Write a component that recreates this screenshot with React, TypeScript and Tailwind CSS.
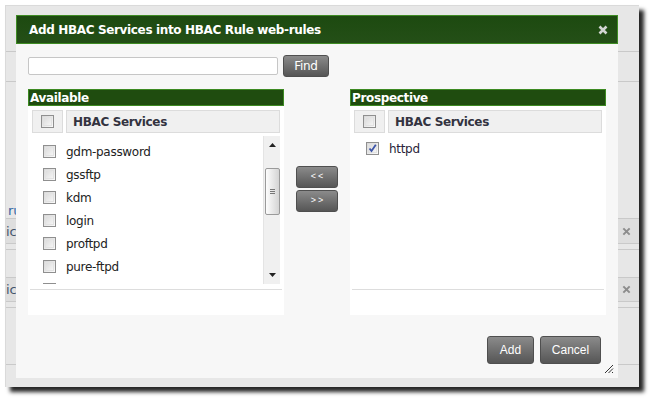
import type { ReactNode } from 'react';

const FONT = { fontFamily: '"DejaVu Sans", Verdana, sans-serif' };
const ARIAL = { fontFamily: '"Liberation Sans", Arial, sans-serif' };

const AVAILABLE = ['gdm-password', 'gssftp', 'kdm', 'login', 'proftpd', 'pure-ftpd', 'pure-ftpd-2'];

// page rows behind the dialog: [height, band]
const PAGE_ROWS: [number, boolean][] = [
  [46, false],
  [30, false],
  [137, false],
  [25, true],
  [6, false],
  [28, false],
  [24, true],
  [6, false],
  [57, false],
];

function Check({ checked = false }: { checked?: boolean }) {
  return (
    <span className="relative block w-[13px] h-[13px] shrink-0 border border-[#8f8f8f] bg-gradient-to-br from-[#d6d6d6] to-[#fbfbfb]">
      <span className="absolute inset-[1px] border border-[#e2e2e2]" />
      {checked && (
        <svg viewBox="0 0 11 11" className="absolute inset-0 w-[11px] h-[11px]">
          <path d="M2.5 5.5 L4.5 8 L8.8 1.8" fill="none" stroke="#3d55a8" strokeWidth="1.8" />
        </svg>
      )}
    </span>
  );
}

function GrayButton({ children, className }: { children: ReactNode; className: string }) {
  return (
    <button
      type="button"
      className={`flex items-center justify-center rounded-[3px] border border-[#4f4f4f] bg-gradient-to-b from-[#8b8b8b] to-[#565656] text-white ${className}`}
    >
      {children}
    </button>
  );
}

function PanelHeader({ title }: { title: string }) {
  return (
    <div className="h-[17px] border border-[#3d8a22] bg-[#1f4c0f] pl-[1px] flex items-center">
      <span className="text-[12px] font-bold text-white tracking-[-0.35px] leading-none">{title}</span>
    </div>
  );
}

function TableHead() {
  return (
    <div className="mt-[4px] mx-[4px] h-[23px] flex gap-[3px]">
      <div className="w-[31px] border border-[#dcdcdc] bg-[#f0f0f0] flex items-center justify-center">
        <Check />
      </div>
      <div className="flex-1 border border-[#dcdcdc] bg-[#f0f0f0] flex items-center pl-[6px]">
        <span className="text-[12px] font-bold text-[#333340] tracking-[-0.35px]">HBAC Services</span>
      </div>
    </div>
  );
}

function ScrollBar() {
  return (
    <div className="w-[17px] h-full bg-[#f0f0f0] border-l border-[#e4e4e4] flex flex-col items-center">
      <svg viewBox="0 0 7 4" className="w-[7px] h-[4px] mt-[7px]">
        <path d="M0 4 L3.5 0 L7 4 Z" fill="#222" />
      </svg>
      <div className="mt-[21px] w-[15px] h-[47px] rounded-[2px] border border-[#9a9a9a] bg-gradient-to-r from-[#fdfdfd] to-[#d4d4d4] flex flex-col items-center justify-center gap-[1px]">
        <span className="block w-[5px] h-px bg-[#777]" />
        <span className="block w-[5px] h-px bg-[#777]" />
        <span className="block w-[5px] h-px bg-[#777]" />
      </div>
      <div className="flex-1" />
      <svg viewBox="0 0 7 4" className="w-[7px] h-[4px] mb-[7px]">
        <path d="M0 0 L7 0 L3.5 4 Z" fill="#222" />
      </svg>
    </div>
  );
}

function PageStrip({ side }: { side: 'left' | 'right' }) {
  return (
    <div className="h-full flex flex-col overflow-hidden">
      {PAGE_ROWS.map(([h, band], i) => (
        <div
          key={i}
          style={{ height: h }}
          className={`shrink-0 border-b border-[#c9c9c9] flex ${band ? 'bg-[#dedede]' : ''} ${
            i === 2 ? 'items-end pb-[1px]' : 'items-center'
          } ${side === 'right' ? 'justify-end pr-[3px]' : ''}`}
        >
          {side === 'left' && i === 2 && (
            <span className="pl-[2px] text-[13px] leading-none text-[#3465a4] whitespace-nowrap">ru</span>
          )}
          {side === 'left' && band && (
            <span className="text-[13px] leading-none text-[#45566c] whitespace-nowrap">ic</span>
          )}
          {side === 'right' && band && (
            <svg viewBox="0 0 10 10" className="w-[9px] h-[9px] mr-[5px]">
              <path d="M1.5 1.5 L8.5 8.5 M8.5 1.5 L1.5 8.5" stroke="#8c8c8c" strokeWidth="2.2" />
            </svg>
          )}
        </div>
      ))}
    </div>
  );
}

export default function App() {
  return (
    <div className="w-[654px] h-[403px] bg-white overflow-hidden pt-[5px] pl-[5px]" style={FONT}>
      <div className="w-[634px] h-[382px] bg-[#e7e7e7] border-t border-l border-[#dadada] shadow-[5px_5px_4px_rgba(0,0,0,0.85)] flex items-start">
        <div className="w-[10px] h-full">
          <PageStrip side="left" />
        </div>

        <div className="relative mt-[9px] w-[602px] h-[363px] bg-[#f7f7f7] flex flex-col">
          <div className="h-[29px] border border-[#3f8c24] bg-gradient-to-b from-[#1d4a10] to-[#244f17] flex items-center justify-between pl-[12px] pr-[9px]">
            <span className="text-[12px] font-bold text-white tracking-[-0.35px]">
              Add HBAC Services into HBAC Rule web-rules
            </span>
            <svg viewBox="0 0 10 10" className="w-[10px] h-[10px]">
              <path d="M1.5 1.5 L8.5 8.5 M8.5 1.5 L1.5 8.5" stroke="#d3d6d3" strokeWidth="2.6" />
            </svg>
          </div>

          <div className="px-[12px] flex flex-col">
            <div className="mt-[11px] flex items-center gap-[5px]">
              <input
                type="text"
                className="w-[250px] h-[18px] rounded-[2px] border border-[#c6c6c6] bg-white outline-none"
              />
              <GrayButton className="w-[46px] h-[22px]">
                <span className="text-[12px] tracking-[-0.3px]">Find</span>
              </GrayButton>
            </div>

            <div className="mt-[12px] flex">
              <div className="w-[256px] flex flex-col">
                <PanelHeader title="Available" />
                <div className="h-[209px] bg-white flex flex-col">
                  <TableHead />
                  <div className="mt-[3px] h-[148px] flex pr-[4px] overflow-hidden">
                    <div className="flex-1 pt-[4px] overflow-hidden">
                      {AVAILABLE.map((name, i) => (
                        <div key={name} className="h-[23px] flex items-center pl-[15px] gap-[10px]">
                          <Check />
                          {i < 6 && (
                            <span className="text-[12px] text-[#222] tracking-[-0.3px]">{name}</span>
                          )}
                        </div>
                      ))}
                    </div>
                    <ScrollBar />
                  </div>
                  <div className="mt-[5px] mx-[2px] h-px bg-[#dddddd]" />
                </div>
              </div>

              <div className="w-[66px] pl-[12px] pt-[77px] flex flex-col gap-[2px]">
                <GrayButton className="w-[42px] h-[22px]">
                  <span className="text-[9px] tracking-[2px] pl-[2px]" style={ARIAL}>&lt;&lt;</span>
                </GrayButton>
                <GrayButton className="w-[42px] h-[22px]">
                  <span className="text-[9px] tracking-[2px] pl-[2px]" style={ARIAL}>&gt;&gt;</span>
                </GrayButton>
              </div>

              <div className="w-[256px] flex flex-col">
                <PanelHeader title="Prospective" />
                <div className="h-[209px] bg-white flex flex-col">
                  <TableHead />
                  <div className="mt-[3px] h-[148px] pt-[1px]">
                    <div className="h-[23px] flex items-center pl-[16px] gap-[10px]">
                      <Check checked />
                      <span className="text-[12px] text-[#2a1f3a] tracking-[-0.3px]">httpd</span>
                    </div>
                  </div>
                  <div className="mt-[5px] mx-[2px] h-px bg-[#dddddd]" />
                </div>
              </div>
            </div>

            <div className="mt-[21px] flex justify-end gap-[6px] pr-[5px]">
              <GrayButton className="w-[47px] h-[28px]">
                <span className="text-[12px]" style={ARIAL}>Add</span>
              </GrayButton>
              <GrayButton className="w-[61px] h-[28px]">
                <span className="text-[12px]" style={ARIAL}>Cancel</span>
              </GrayButton>
            </div>
          </div>

          <svg viewBox="0 0 10 10" className="absolute right-[4px] bottom-[4px] w-[10px] h-[10px]">
            <path d="M9 1 L1 9 M9 4.5 L4.5 9 M9 8 L8 9" stroke="#333" strokeWidth="1" />
          </svg>
        </div>

        <div className="flex-1 h-full">
          <PageStrip side="right" />
        </div>
      </div>
    </div>
  );
}
